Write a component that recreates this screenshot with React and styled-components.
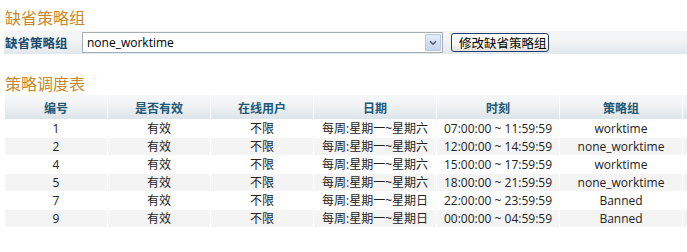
import React from "react";
import styled, { createGlobalStyle } from "styled-components";

const GlobalStyle = createGlobalStyle`
  html, body {
    margin: 0;
    padding: 0;
    background: #ffffff;
    overflow: hidden;
  }
  body {
    font-family: "Open Sans", "Noto Sans CJK SC", sans-serif;
    font-size: 12px;
    color: #222222;
  }
`;

const Page = styled.div`
  padding: 0 0 0 4px;
  width: 760px;
`;

const Title = styled.h2`
  margin: ${(p) => p.$top}px 0 0 0;
  padding-left: 1px;
  height: 22px;
  line-height: 22px;
  font-family: "Noto Sans CJK SC", sans-serif;
  font-size: 16px;
  font-weight: normal;
  color: #c8872a;
`;

const FormBar = styled.div`
  margin-top: 3px;
  height: 23px;
  display: flex;
  align-items: center;
  background: linear-gradient(#f5f6f7 0%, #f1f3f4 45%, #e1e8ed 100%);
`;

const Label = styled.span`
  width: 78px;
  padding-left: 1px;
  box-sizing: border-box;
  font-family: "Noto Sans CJK SC", sans-serif;
  font-size: 12.5px;
  font-weight: bold;
  color: #1b4a6e;
`;

const SelectBox = styled.div`
  width: 361px;
  height: 21px;
  box-sizing: border-box;
  border: 1px solid #a5acb2;
  background: #ffffff;
  display: flex;
  align-items: stretch;
`;

const SelectValue = styled.span`
  flex: 1;
  padding-left: 4px;
  line-height: 19px;
  font-family: "Open Sans", sans-serif;
  font-size: 12px;
  color: #000000;
`;

const ArrowButton = styled.span`
  width: 16px;
  margin: 1px 1px 1px 0;
  box-sizing: border-box;
  border: 1px solid #b8c8e2;
  border-radius: 1px;
  background: linear-gradient(#e4ecf8, #c6d5ec);
  display: flex;
  align-items: center;
  justify-content: center;
`;

const Button = styled.button`
  margin-left: 8px;
  width: 98px;
  height: 19px;
  padding: 0 0 0 7px;
  box-sizing: border-box;
  border: 1px solid #1e3c6c;
  border-radius: 3px;
  background: linear-gradient(#ffffff 0%, #f6f5f1 60%, #e4e2da 100%);
  font-family: "Noto Sans CJK SC", sans-serif;
  font-size: 12.5px;
  line-height: 17px;
  color: #000000;
  text-align: left;
  white-space: nowrap;
  overflow: hidden;
`;

const Table = styled.table`
  margin-top: 0;
  border-collapse: separate;
  border-spacing: 1px;
  table-layout: fixed;
  width: 778px;
`;

const Col = styled.col`
  width: ${(p) => p.$w}px;
`;

const Th = styled.th`
  height: 24px;
  padding: 0;
  background: linear-gradient(#f6f7f8 0%, #f0f2f3 45%, #dbe4e9 100%);
  font-family: "Noto Sans CJK SC", sans-serif;
  font-size: 12px;
  font-weight: bold;
  color: #1d5777;
  text-align: center;
  vertical-align: middle;
`;

const Row = styled.tr`
  background: ${(p) => (p.$alt ? "#f4f4f4" : "#ffffff")};
`;

const Td = styled.td`
  height: 17px;
  padding: 0;
  line-height: 17px;
  text-align: center;
  vertical-align: middle;
  white-space: nowrap;
  overflow: hidden;
  color: #222222;
`;

const Chevron = () => (
  <svg width="8" height="6" viewBox="0 0 8 6">
    <path d="M1 1.2 L4 4.2 L7 1.2" fill="none" stroke="#4a5f86" strokeWidth="1.6" />
  </svg>
);

const rows = [
  ["1", "有效", "不限", "每周:星期一~星期六", "07:00:00 ~ 11:59:59", "worktime"],
  ["2", "有效", "不限", "每周:星期一~星期六", "12:00:00 ~ 14:59:59", "none_worktime"],
  ["4", "有效", "不限", "每周:星期一~星期六", "15:00:00 ~ 17:59:59", "worktime"],
  ["5", "有效", "不限", "每周:星期一~星期六", "18:00:00 ~ 21:59:59", "none_worktime"],
  ["7", "有效", "不限", "每周:星期一~星期日", "22:00:00 ~ 23:59:59", "Banned"],
  ["9", "有效", "不限", "每周:星期一~星期日", "00:00:00 ~ 04:59:59", "Banned"],
];

const headers = ["编号", "是否有效", "在线用户", "日期", "时刻", "策略组", ""];
const widths = [102, 102, 102, 122, 122, 122, 98];

export default function App() {
  return (
    <>
      <GlobalStyle />
      <Page>
        <Title $top={6}>缺省策略组</Title>
        <FormBar>
          <Label>缺省策略组</Label>
          <SelectBox>
            <SelectValue>none_worktime</SelectValue>
            <ArrowButton>
              <Chevron />
            </ArrowButton>
          </SelectBox>
          <Button type="button">修改缺省策略组</Button>
        </FormBar>
        <Title $top={18}>策略调度表</Title>
        <Table>
          <colgroup>
            {widths.map((w, i) => (
              <Col key={i} $w={w} />
            ))}
          </colgroup>
          <thead>
            <tr>
              {headers.map((h, i) => (
                <Th key={i}>{h}</Th>
              ))}
            </tr>
          </thead>
          <tbody>
            {rows.map((r, i) => (
              <Row key={r[0]} $alt={i % 2 === 1}>
                {r.map((c, j) => (
                  <Td key={j}>{c}</Td>
                ))}
                <Td />
              </Row>
            ))}
          </tbody>
        </Table>
      </Page>
    </>
  );
}
